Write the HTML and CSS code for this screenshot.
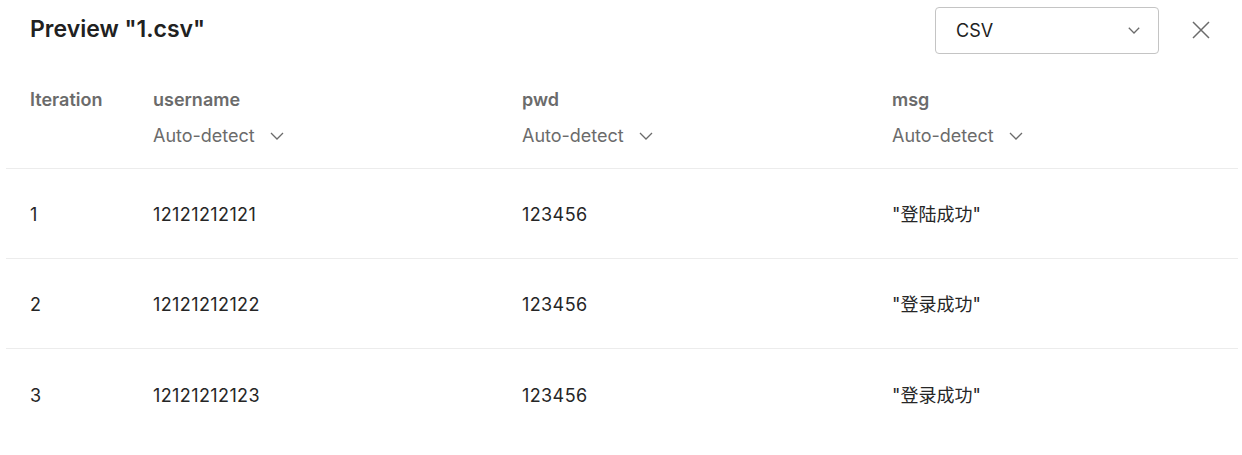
FILE: index.html
```html
<!DOCTYPE html>
<html>
<head>
<meta charset="utf-8">
<link rel="stylesheet" href="styles.css">
</head>
<body>
<div class="modal">
  <div class="topbar">
    <h1 class="title">Preview "1.csv"</h1>
    <div class="actions">
      <div class="select">
        <span>CSV</span>
        <svg class="chev" width="12" height="7" viewBox="0 0 12 7"><polyline points="0.8,0.8 6,6 11.2,0.8" fill="none" stroke="#6b6b6b" stroke-width="1.3"/></svg>
      </div>
      <button class="close" aria-label="Close">
        <svg width="18" height="18" viewBox="0 0 18 18"><path d="M1 1 L17 17 M17 1 L1 17" stroke="#6b6b6b" stroke-width="1.5" fill="none"/></svg>
      </button>
    </div>
  </div>
  <div class="table">
    <div class="row head">
      <div class="cell c0"><div class="label">Iteration</div></div>
      <div class="cell c1"><div class="label">username</div><div class="type">Auto-detect <svg width="14" height="8" viewBox="0 0 14 8"><polyline points="1,1 7,7 13,1" fill="none" stroke="#6b6b6b" stroke-width="1.3"/></svg></div></div>
      <div class="cell c2"><div class="label">pwd</div><div class="type">Auto-detect <svg width="14" height="8" viewBox="0 0 14 8"><polyline points="1,1 7,7 13,1" fill="none" stroke="#6b6b6b" stroke-width="1.3"/></svg></div></div>
      <div class="cell c3"><div class="label">msg</div><div class="type">Auto-detect <svg width="14" height="8" viewBox="0 0 14 8"><polyline points="1,1 7,7 13,1" fill="none" stroke="#6b6b6b" stroke-width="1.3"/></svg></div></div>
    </div>
    <div class="row body">
      <div class="cell c0">1</div>
      <div class="cell c1">12121212121</div>
      <div class="cell c2">123456</div>
      <div class="cell c3">"登陆成功"</div>
    </div>
    <div class="row body">
      <div class="cell c0">2</div>
      <div class="cell c1">12121212122</div>
      <div class="cell c2">123456</div>
      <div class="cell c3">"登录成功"</div>
    </div>
    <div class="row body last">
      <div class="cell c0">3</div>
      <div class="cell c1">12121212123</div>
      <div class="cell c2">123456</div>
      <div class="cell c3">"登录成功"</div>
    </div>
  </div>
</div>
</body>
</html>
```

FILE: styles.css
```css
* { box-sizing: border-box; }
html, body { margin: 0; padding: 0; background: #ffffff; }
body {
  font-family: Inter, "Noto Sans CJK SC", sans-serif;
  color: #212121;
  width: 1242px;
  height: 455px;
  overflow: hidden;
}
.topbar {
  height: 60px;
  display: flex;
  align-items: center;
  justify-content: space-between;
  padding: 0 25px 0 30px;
}
.title {
  margin: 0 0 3px 0;
  font-size: 23px;
  font-weight: 600;
  line-height: 28px;
  color: #212121;
}
.actions {
  display: flex;
  align-items: center;
  gap: 26px;
}
.select {
  width: 224px;
  height: 47px;
  border: 1px solid #c4c4c4;
  border-radius: 4px;
  display: flex;
  align-items: center;
  justify-content: space-between;
  padding: 0 18px 0 20px;
  font-size: 18px;
  color: #212121;
}
.close {
  width: 32px;
  height: 32px;
  border: 0;
  background: none;
  padding: 0;
  display: flex;
  align-items: center;
  justify-content: center;
}
.table {
  margin: 0 4px 0 6px;
}
.row {
  display: flex;
  border-bottom: 1px solid #ececec;
}
.row.last { border-bottom: 0; }
.row.head {
  padding-top: 28px;
  height: 109px;
}
.row.body {
  height: 90px;
  align-items: center;
  font-size: 18px;
  color: #262626;
  letter-spacing: 0.4px;
}
.row.body .cell { line-height: 24px; padding-top: 3px; }
.row.body .c3 { letter-spacing: 0; }
.cell { padding-left: 24px; }
.c0 { width: 123px; }
.c1 { width: 369px; }
.c2 { width: 370px; }
.c3 { flex: 1; }
.label {
  font-size: 18px;
  font-weight: 600;
  line-height: 24px;
  color: #6b6b6b;
}
.type {
  margin-top: 12px;
  font-size: 18px;
  line-height: 24px;
  color: #6b6b6b;
  display: flex;
  align-items: center;
  gap: 15px;
}
```
